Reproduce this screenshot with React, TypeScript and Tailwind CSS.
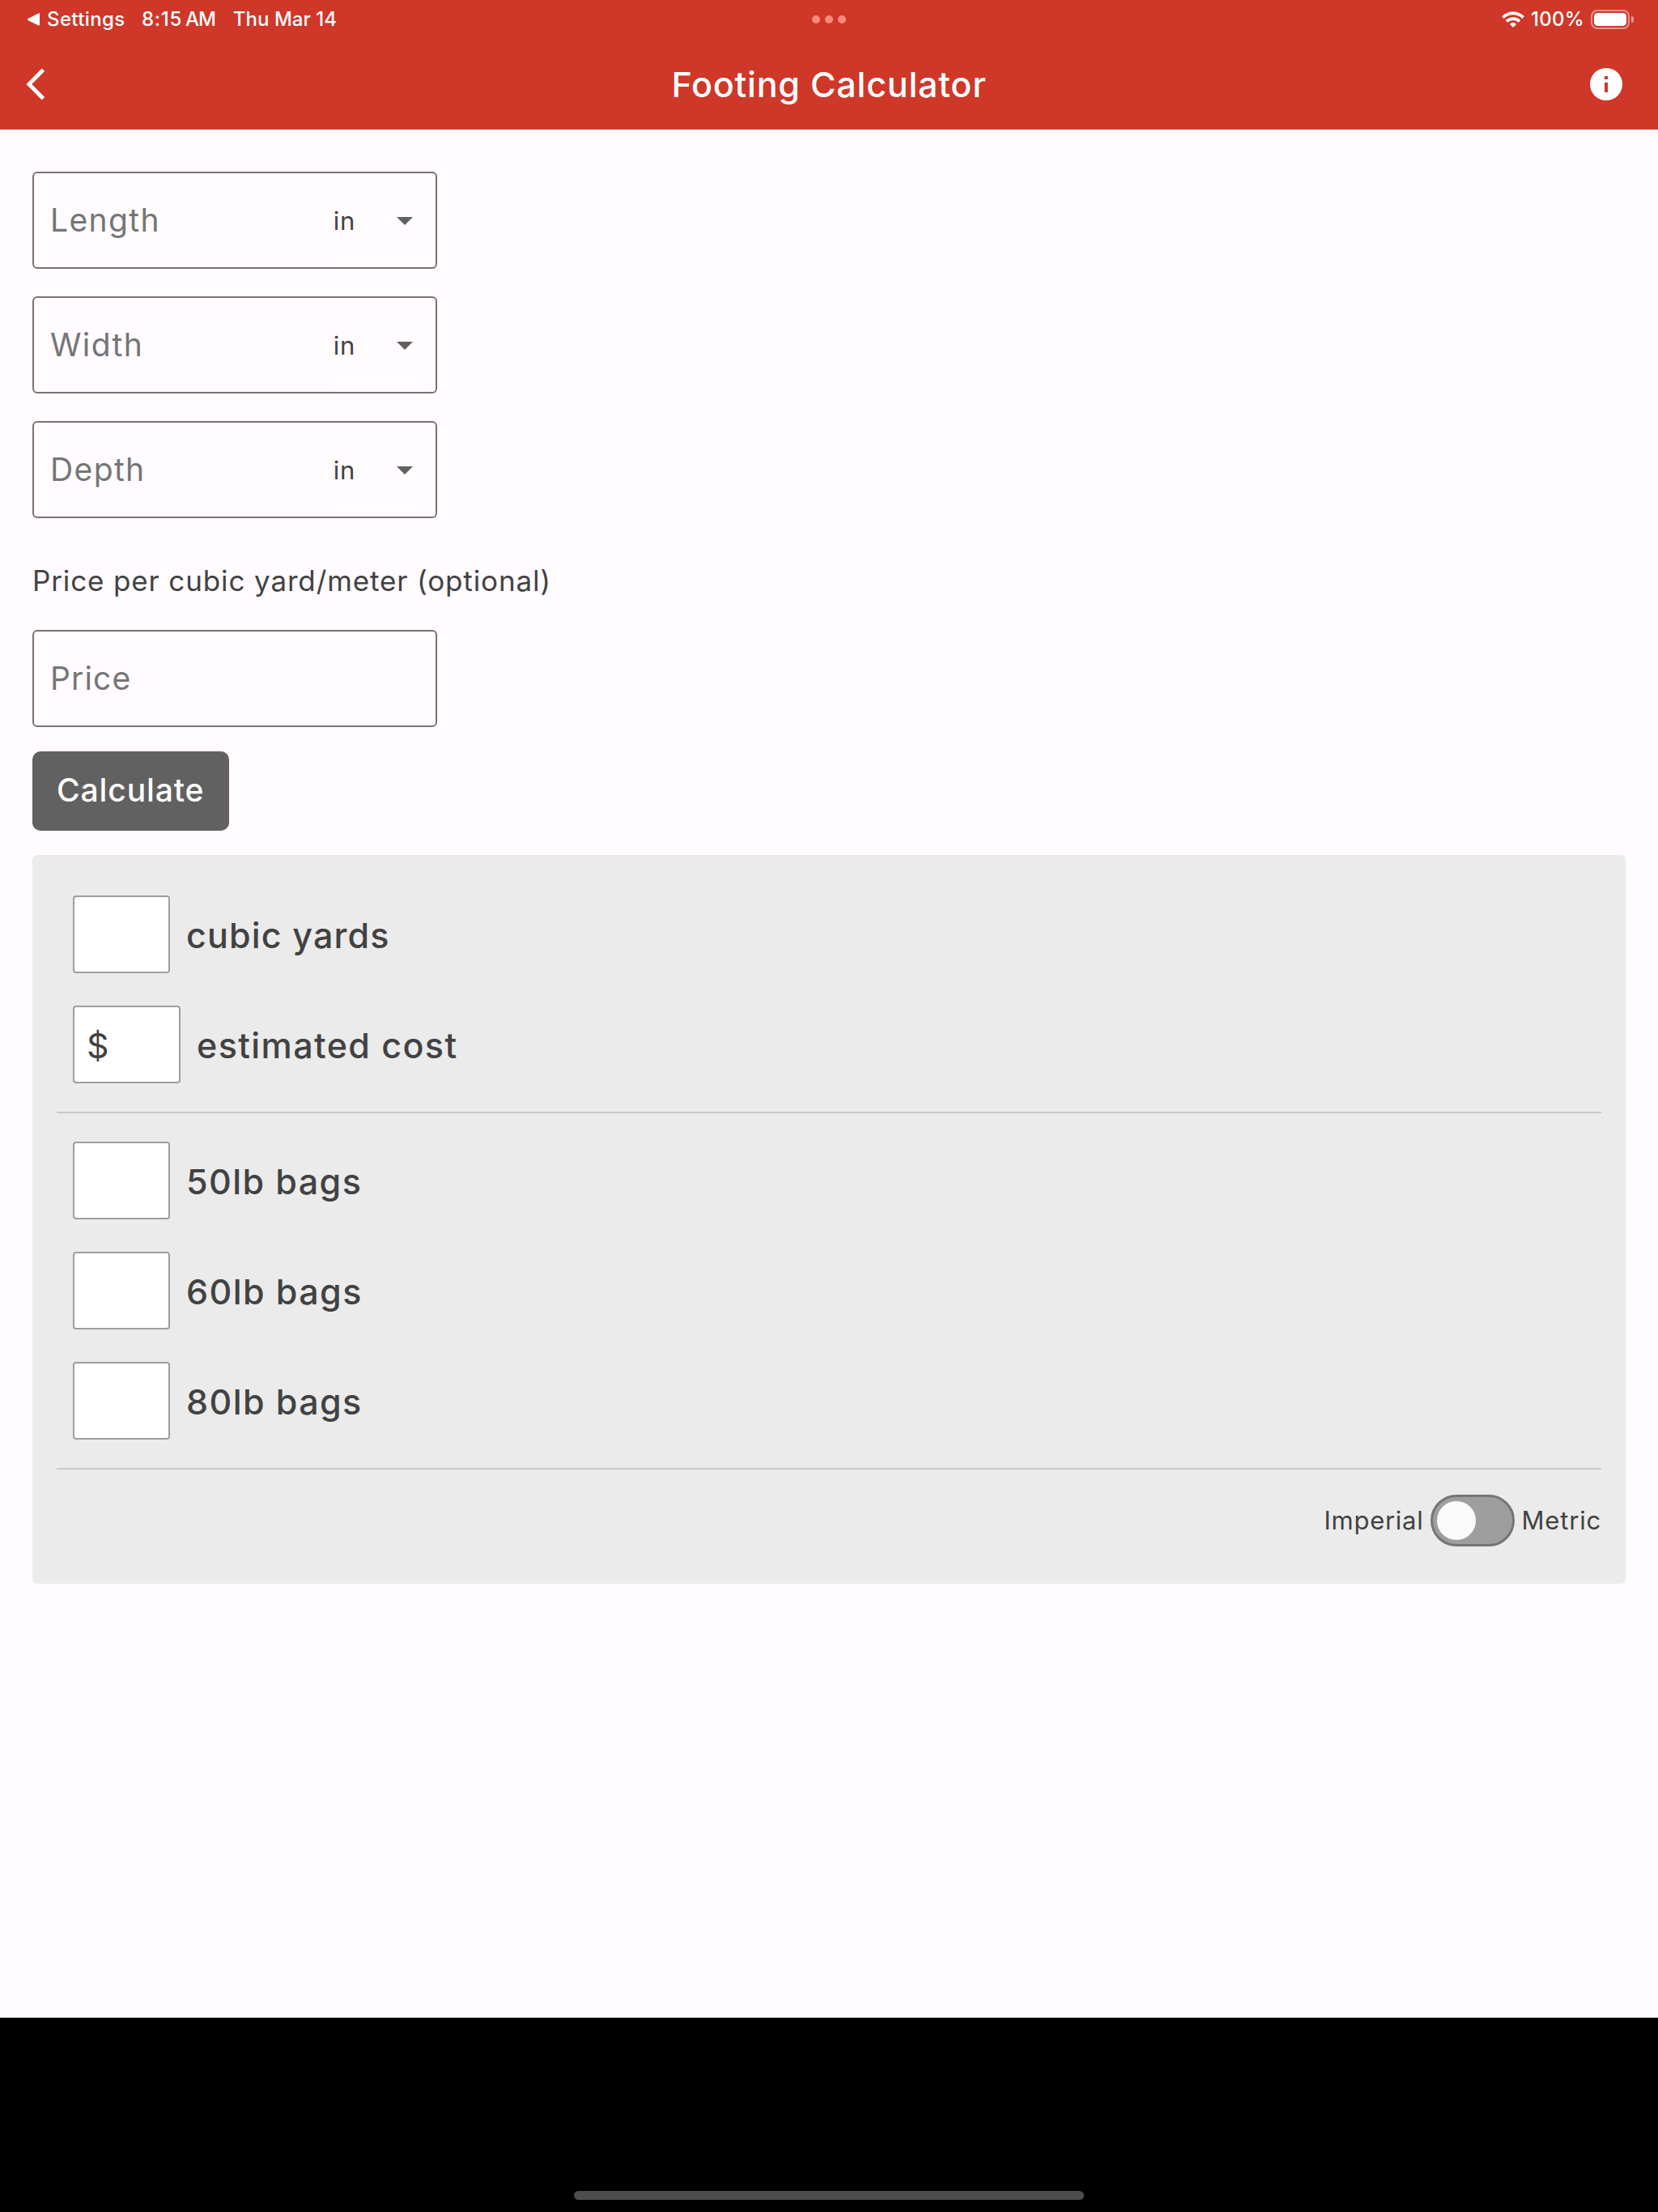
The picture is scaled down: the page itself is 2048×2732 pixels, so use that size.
import { useState } from "react";

const DIMENSIONS = ["Length", "Width", "Depth"];
const BAGS = ["50lb bags", "60lb bags", "80lb bags"];

function WifiIcon() {
  return (
    <svg width="28" height="20" viewBox="0 0 28 20" fill="none" stroke="#fff" strokeWidth="3.7">
      <path d="M1.4 7.6A18 18 0 0 1 26.6 7.6" />
      <path d="M6 12.4A11.3 11.3 0 0 1 22 12.4" />
      <path
        d="M14 19.3L10.4 15.9A5.4 5.4 0 0 1 17.6 15.9Z"
        fill="#fff"
        strokeWidth="1"
        strokeLinejoin="round"
      />
    </svg>
  );
}

function Battery() {
  return (
    <div className="flex items-center">
      <div className="flex h-6 w-12 rounded-[8px] border-2 border-white/45 p-[2px]">
        <div className="h-full w-full rounded-[4.5px] bg-white" />
      </div>
      <div className="ml-[2px] h-2 w-[3px] rounded-r-full bg-white/50" />
    </div>
  );
}

function StatusBar() {
  return (
    <div className="grid h-12 grid-cols-[1fr_auto_1fr] items-center text-2xl/6 font-medium">
      <div className="flex items-center whitespace-nowrap pl-[33px]">
        <svg width="17" height="16" viewBox="0 0 17 16" fill="#fff" stroke="#fff" strokeWidth="2" strokeLinejoin="round">
          <path d="M2 8L15 1.4V14.6Z" />
        </svg>
        <span className="ml-[8px] pb-px tracking-[0.38px]">Settings</span>
        <span className="ml-[20.5px] pb-px tracking-[0.65px]">8:15</span>
        <span className="ml-[4px] pb-px tracking-[-1px]">AM</span>
        <span className="ml-[22px] pb-px tracking-[0.04px]">Thu Mar 14</span>
      </div>
      <div className="flex gap-[6px]">
        <i className="size-[10px] rounded-full bg-[#ff8a7c]" />
        <i className="size-[10px] rounded-full bg-[#ff8a7c]" />
        <i className="size-[10px] rounded-full bg-[#ff8a7c]" />
      </div>
      <div className="flex items-center justify-end pr-[30px]">
        <WifiIcon />
        <span className="mr-[8px] ml-[8px] pb-px tracking-[0.3px]">100%</span>
        <Battery />
      </div>
    </div>
  );
}

function NavBar() {
  return (
    <div className="grid h-28 grid-cols-[1fr_auto_1fr] items-center">
      <button className="ml-8 w-fit">
        <svg width="24" height="40" viewBox="0 0 24 40" fill="none" stroke="#fff" strokeWidth="4.8">
          <path d="M21.4 2.2L3.8 20L21.4 37.8" />
        </svg>
      </button>
      <h1 className="text-[43px]/[52px] font-medium tracking-[0.8px]">Footing Calculator</h1>
      <button className="mr-11 w-fit justify-self-end">
        <svg width="40" height="40" viewBox="0 0 40 40">
          <circle cx="20" cy="20" r="20" fill="#fff" />
          <path d="M18 10h4v4h-4zM18 18h4v12h-4z" fill="#cf3729" />
        </svg>
      </button>
    </div>
  );
}

function DimensionField({ label }: { label: string }) {
  return (
    <div className="flex h-[120px] w-[500px] justify-between rounded-[6px] border-2 border-[#757575] pr-[14px] pl-[20px]">
      <span className="self-center text-[39px]/[48px] tracking-[1.4px] text-[#757575]">{label}</span>
      <div className="mt-[9px] flex h-[98px] w-[114px] items-center justify-between border-b-2 border-white pt-[4px] pr-[14px] pl-[1.7px]">
        <span className="text-[31px]/[38px] tracking-[0.8px] text-[#424242]">in</span>
        <svg width="20" height="10" viewBox="0 0 20 10" fill="#616161">
          <path d="M0 0h20L10 10z" />
        </svg>
      </div>
    </div>
  );
}

function ResultRow({ label, prefix }: { label: string; prefix?: string }) {
  return (
    <div className="flex items-center gap-5 text-[43px]/[52px] text-[#424242]">
      <div
        className={`flex h-24 items-center rounded-[4px] border-2 border-[#9e9e9e] bg-white pt-[2px] pl-[15px] ${
          prefix ? "w-[133px]" : "w-[120px]"
        }`}
      >
        {prefix}
      </div>
      <span
        className={`pt-px font-medium ${label === "cubic yards" ? "tracking-[1.15px]" : "tracking-[1.42px]"}`}
      >
        {label}
      </span>
    </div>
  );
}

export default function App() {
  const [metric, setMetric] = useState(false);

  return (
    <div className="flex h-[2732px] w-[2048px] flex-col bg-[#fffbff] font-[Inter,Roboto,sans-serif]">
      <header className="bg-[#cf3729] text-white">
        <StatusBar />
        <NavBar />
      </header>

      <main className="flex grow flex-col items-start px-10 pt-[52px]">
        <div className="flex flex-col gap-[34px]">
          {DIMENSIONS.map((d) => (
            <DimensionField key={d} label={d} />
          ))}
        </div>

        <p className="mt-[55px] text-[35px]/[44px] tracking-[0.87px] text-[#424242]">
          Price per cubic yard/meter (optional)
        </p>
        <div className="mt-[39px] flex h-[120px] w-[500px] items-center rounded-[6px] border-2 border-[#757575] pl-[20px] text-[39px]/[48px] tracking-[1.12px] text-[#757575]">
          Price
        </div>

        <button className="mt-[30px] h-[98px] w-[242.5px] rounded-[10px] bg-[#616161] pb-[2px] text-[39px]/[48px] font-medium tracking-[0.89px] text-white">
          Calculate
        </button>

        <section className="mt-[30px] h-[900px] w-full rounded-[6px] bg-[#ebebeb] px-[30px] pt-[50px]">
          <div className="flex flex-col gap-10 border-b-2 border-[#c9c9c9] pb-[35px] pl-5">
            <ResultRow label="cubic yards" />
            <ResultRow label="estimated cost" prefix="$" />
          </div>
          <div className="flex flex-col gap-10 border-b-2 border-[#c9c9c9] pt-[35px] pb-[35px] pl-5">
            {BAGS.map((b) => (
              <ResultRow key={b} label={b} />
            ))}
          </div>
          <div className="mt-[31px] flex items-center justify-end gap-2 text-[31px]/[38px] text-[#424242]">
            <span className="mr-px tracking-[0.73px]">Imperial</span>
            <button
              onClick={() => setMetric(!metric)}
              className={`flex h-16 w-[104px] items-center rounded-full border-3 border-[#757575] bg-[#9e9e9e] px-[5px] ${
                metric ? "justify-end" : "justify-start"
              }`}
            >
              <span className="size-12 rounded-full bg-[#fafafa]" />
            </button>
            <span className="tracking-[0.82px]">Metric</span>
          </div>
        </section>
      </main>

      <footer className="flex h-[240px] items-end justify-center bg-black pb-[15px]">
        <div className="h-[11px] w-[630px] rounded-full bg-[#4d4d4d]" />
      </footer>
    </div>
  );
}
